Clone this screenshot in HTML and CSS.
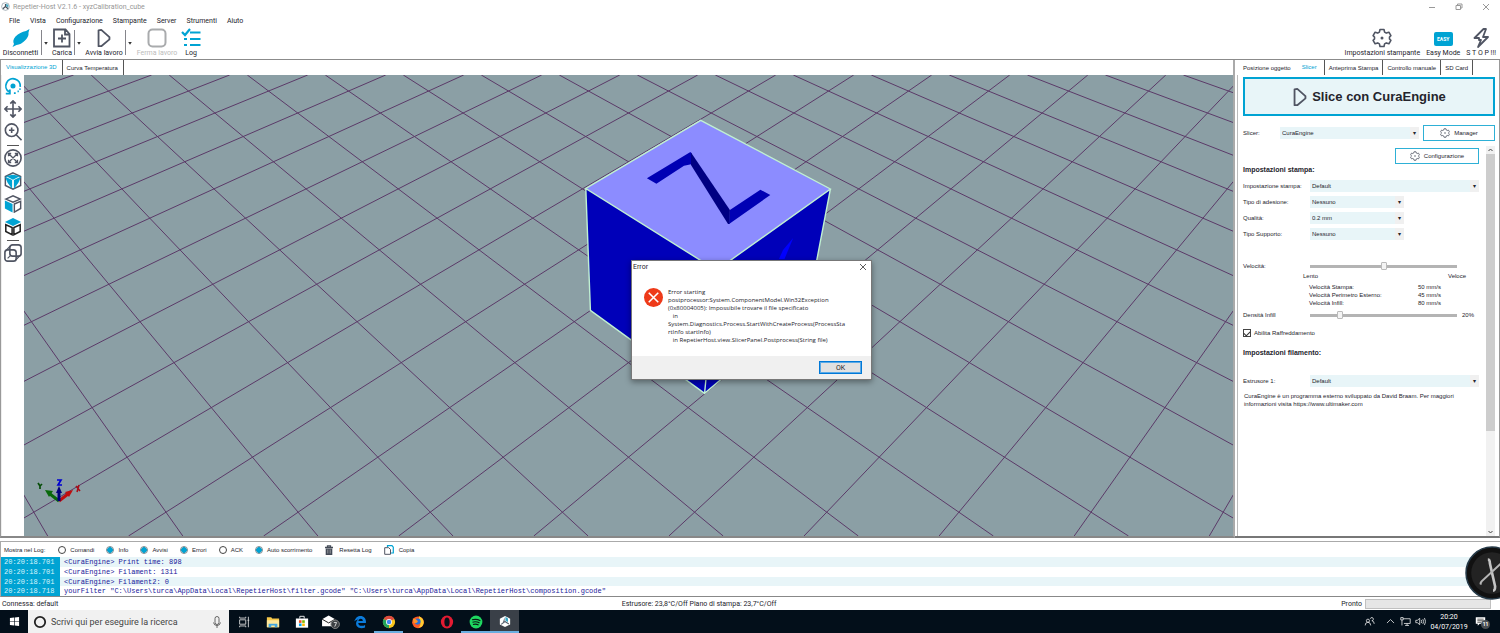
FILE: index.html
```html
<!DOCTYPE html>
<html lang="it">
<head>
<meta charset="utf-8">
<title>Repetier-Host V2.1.6 - xyzCalibration_cube</title>
<link rel="stylesheet" href="styles.css">
</head>
<body>
<svg class="defs" aria-hidden="true">
  <symbol id="gear" viewBox="0 0 20 20"><path d="M8 1.500h4l.6 2.600 1.700 1 2.600-.9 2 3.400-1.400 1.400v2l1.400 1.400-2 3.400-2.600-.9-1.700 1L12 18.500H8l-.6-2.600-1.700-1-2.600.9-2-3.400L2.500 11V9L1.100 7.600l2-3.400 2.600.9 1.700-1z" fill="none" stroke="#505563" stroke-width="1.600" stroke-linejoin="round"/><circle cx="10" cy="10" r="1.500" fill="#505563"/></symbol>
  <symbol id="play" viewBox="0 0 16 22"><path d="M2 2.500v17.500h3L14 12.500v-2.500L5 2z" fill="none" stroke="#505563" stroke-width="2" stroke-linejoin="round"/></symbol>
  <symbol id="host" viewBox="0 0 14 14"><path d="M7 .5l6 3.200v6.800l-6 3-6-3V3.700z" fill="#fff"/><path d="M7 7L2.500 10.300M7 7l4.500 3" fill="none" stroke="#56616e" stroke-width="1.300"/><path d="M6.500 2v5l-2 1.500z" fill="#56616e"/><path d="M7.500 1.500l3 2v4l-3-1.500z" fill="#39a9c7"/></symbol>
</svg>

<header class="titlebar">
  <svg class="title-icon" viewBox="0 0 14 14"><circle cx="7" cy="7" r="6" fill="#fff" stroke="#7c8b96"/><path d="M7 3v4l-4 3.500M7 7l4 3.500" fill="none" stroke="#46505c" stroke-width="1.800"/><path d="M8 2.500l3.500 2v4L8 6.500z" fill="#47aac5"/></svg>
  <span class="title">Repetier-Host V2.1.6 - xyzCalibration_cube</span>
  <div class="window-buttons">
    <button aria-label="Riduci"><svg viewBox="0 0 8 8"><path d="M1 4.500h6"/></svg></button>
    <button aria-label="Ripristina"><svg viewBox="0 0 8 8"><path d="M1 2.500h4.500v4H1zM2.500 2.500v-1.500H7v4H5.500"/></svg></button>
    <button aria-label="Chiudi"><svg viewBox="0 0 8 8"><path d="M1 1l6 6M7 1L1 7"/></svg></button>
  </div>
</header>

<nav class="menubar">
  <button>File</button><button>Vista</button><button>Configurazione</button><button>Stampante</button><button>Server</button><button>Strumenti</button><button>Aiuto</button>
</nav>

<div class="toolbar">
  <button class="tool tool-first"><svg viewBox="0 0 20 20"><path d="M1.500 19l1.500-3Q1 12.500 4.500 8.500 9 4 15 3l3.500-2-1 3.500q.5 4-3.500 8T5.500 17z" fill="#00a3d3"/></svg>Disconnetti</button>
  <i class="sep"></i><i class="caret"></i>
  <button class="tool tool-load"><svg viewBox="0 0 20 20"><path d="M3 1.500h10.500l4 4.500v12.500H2V1.500zM13 1.500v5h4.500M10 6.500v8M6 10.500h8" fill="none" stroke="#505563" stroke-width="1.800"/></svg>Carica</button>
  <i class="sep"></i><i class="caret"></i>
  <button class="tool tool-run"><svg viewBox="0 0 16 22"><use href="#play"/></svg>Avvia lavoro</button>
  <i class="sep"></i><i class="caret"></i>
  <button class="tool tool-stop" disabled><svg viewBox="0 0 20 20"><rect x="1.500" y="1.500" width="17" height="17" rx="4" fill="none" stroke="#a9abad" stroke-width="2"/></svg>Ferma lavoro</button>
  <button class="tool tool-log"><svg viewBox="0 0 20 20"><path d="M1 4l3 3 5-6M9 4.500h10.500M9 11h10.500M9 17h10.500M3 11h3M3 17h3" fill="none" stroke="#00a3d3" stroke-width="2.200"/></svg>Log</button>
  <div class="toolbar-right">
    <button class="tool"><svg viewBox="0 0 20 20"><use href="#gear"/></svg>Impostazioni stampante</button>
    <button class="tool"><span class="easy">EASY</span>Easy Mode</button>
    <button class="tool"><svg viewBox="0 0 20 20"><path d="M12.500 1L3.500 10h4.500v2h2L7 19l10-10h-5l3-8z" fill="none" stroke="#505563" stroke-width="1.800" stroke-linejoin="round"/></svg>S T O P !!!</button>
  </div>
</div>

<main class="workspace">
  <section class="stage">
    <div class="tabs">
      <button class="tab active">Visualizzazione 3D</button><button class="tab">Curva Temperatura</button>
    </div>
    <div class="stage-body">
      <div class="view-tools">
        <button aria-label="Ruota"><svg viewBox="0 0 20 20"><path d="M5.500 16.500A8 8 0 1 1 18 11M2 18.500h4.500V14" fill="none" stroke="#00a3d3" stroke-width="2"/><circle cx="10" cy="10" r="2.800" fill="#00a3d3" stroke="none"/><path d="M11 18h2M15 16h1.500M17 13.500h1.500" stroke="#00a3d3" stroke-width="2"/></svg></button>
        <button aria-label="Sposta"><svg viewBox="0 0 20 20"><path d="M10 1v18M1 10h18M7 4l3-3 3 3M7 16l3 3 3-3M4 7l-3 3 3 3M16 7l3 3-3 3"/></svg></button>
        <button aria-label="Zoom"><svg viewBox="0 0 20 20"><circle cx="8.500" cy="8" r="7"/><path d="M13.500 13l6 6M8.500 5v6M5.500 8h6"/></svg></button>
        <i></i>
        <button aria-label="Adatta"><svg viewBox="0 0 20 20"><circle cx="10" cy="10" r="9"/><path d="M5 5l10 10M15 5L5 15M5 8V5h3M12 5h3v3M5 12v3h3M12 15h3v-3" stroke-width="1.400"/></svg></button>
        <button aria-label="Isometrica"><svg viewBox="0 0 20 20"><path d="M10 1l8.500 4v10L10 19l-8.500-4V5z" stroke-width="1.600"/><path d="M1 5l8 4v10L4 12z M19 5l-8 4v10l5-7z M2 4.500L10 3l8 1.500L10 8.500z" fill="#00a3d3" stroke="none"/></svg></button>
        <button aria-label="Fronte"><svg viewBox="0 0 20 20"><path d="M2 4.500L10 1l8 3.500-8 3.500zM11.500 10l7-3v8l-7 4z" stroke-width="1.600"/><path d="M1 6l8.500 4v9.500L1 15z" fill="#00a3d3" stroke="none"/></svg></button>
        <button aria-label="Alto"><svg viewBox="0 0 20 20"><path d="M2 7.500l7 3v8l-7-3.500zM18 7.500l-7 3v8l7-3.500z" stroke="#222" stroke-width="1.700"/><path d="M10 0l9 4.500-9 4.500-9-4.500z" fill="#00a3d3" stroke="none"/></svg></button>
        <i></i>
        <button aria-label="Prospettiva"><svg viewBox="0 0 20 20"><rect x="6.500" y="1" width="12.500" height="12.500" rx="3"/><rect x="1" y="6.500" width="12.500" height="12.500" rx="3"/><path d="M2 7.500l5-5.500M13 18l5-5.500M4 16l4-4" stroke-width="1.300"/></svg></button>
      </div>
      <svg class="scene" viewBox="0 0 1209 461" preserveAspectRatio="xMidYMid slice" role="img" aria-label="Cubo sul piano di stampa">
        <rect width="1209" height="461" fill="#8b9fa5"/>
        <g fill="none" stroke="#5b3a68" stroke-width="1">
          <path id="grid-lines" d="M-244.800 0L23.700 461M-166.800 0L158.800 461M-88.800 0L293.900 461M-10.800 0L429 461M67.200 0L564.100 461M145.200 0L699.200 461M223.300 0L834.300 461M301.300 0L969.400 461M379.300 0L1104.500 461M457.300 0L1239.600 461M535.300 0L1374.700 461M613.300 0L1509.800 461M691.300 0L1644.900 461M769.300 0L1780 461M847.300 0L1915.100 461M925.300 0L2050.200 461M1003.400 0L2185.300 461M1081.400 0L2320.400 461M1159.400 0L2455.500 461"/>
          <use href="#grid-lines" transform="translate(1209 0) scale(-1 1)"/>
        </g>
        <path d="M561.800 113.500L692.400 195.300 806.400 114 784 231 680.600 318.300 566.400 235.300z" fill="#0000b9"/>
        <path d="M676.700 45.300L806.400 114 692.400 195.300 561.800 113.500z" fill="#8c8cff"/>
        <path d="M755 184l4-9 10.200-12-8.700 21z" fill="#0000ff"/>
        <path d="M622.900 103.300L666.400 77l1.600 2-.8 10.300-7.200 1.400-27.600 18zM736.400 114.700l9.900 5.300-41.200 29 .8-14z" fill="#0000b4"/>
        <path d="M667 77.500l38.900 57.500-.4 14h-1.500L667 90z" fill="#000082"/>
        <path d="M676.700 45.300L806.400 114 692.400 195.300 561.800 113.500zM561.800 113.500l4.600 121.800 114.200 83L784 231l22.400-117M692.400 195.300L680.600 318.300" fill="none" stroke="#c0f0d2" stroke-width="1.400"/>
        <g stroke-width="3"><path d="M35 426L26 419" stroke="#08690b"/><path d="M35 426l9-7" stroke="#c00d0d"/><path d="M35 426v-10" stroke="#00007c"/></g>
        <path d="M21 415l8 1-4 6z" fill="#08690b"/><path d="M49 415l-8 2 4 5z" fill="#c00d0d"/><path d="M35 411l-3 7h6z" fill="#00007c"/>
        <path d="M14 408l2 3 2-2M16 411v3" fill="none" stroke="#064d08" stroke-width="1.700"/><path d="M33 405h4l-3 5h4" fill="none" stroke="#0000d2" stroke-width="1.700"/><path d="M55 410l-2 7M52 411l4 5" fill="none" stroke="#a90d18" stroke-width="1.500"/>
      </svg>
    </div>
  </section>

  <aside class="side">
    <div class="tabs side-tabs">
      <button class="tab">Posizione oggetto</button><button class="tab active">Slicer</button><button class="tab">Anteprima Stampa</button><button class="tab">Controllo manuale</button><button class="tab">SD Card</button>
    </div>
    <div class="panel">
      <button class="slice"><svg viewBox="0 0 16 22"><use href="#play"/></svg>Slice con CuraEngine</button>
      <div class="slicer-row">
        <label for="slicer">Slicer:</label>
        <span class="pick"><select id="slicer"><option>CuraEngine</option></select></span>
        <button class="boxed"><svg viewBox="0 0 20 20"><use href="#gear"/></svg>Manager</button>
      </div>
      <div class="settings">
        <form class="form">
          <button type="button" class="boxed config"><svg viewBox="0 0 20 20"><use href="#gear"/></svg>Configurazione</button>
          <h2>Impostazioni stampa:</h2>
          <div class="row"><label for="preset">Impostazione stampa:</label><span class="pick"><select id="preset"><option>Default</option></select></span></div>
          <div class="row short"><label for="adesione">Tipo di adesione:</label><span class="pick"><select id="adesione"><option>Nessuno</option></select></span></div>
          <div class="row short"><label for="qualita">Qualità:</label><span class="pick"><select id="qualita"><option>0.2 mm</option></select></span></div>
          <div class="row short"><label for="supporto">Tipo Supporto:</label><span class="pick"><select id="supporto"><option>Nessuno</option></select></span></div>
          <div class="row speed"><label for="velocita">Velocità:</label><input id="velocita" type="range" min="0" max="100" value="50"></div>
          <div class="ends"><span>Lento</span><span>Veloce</span></div>
          <dl class="speeds"><dt>Velocità Stampa:</dt><dd>50 mm/s</dd><dt>Velocità Perimetro Esterno:</dt><dd>45 mm/s</dd><dt>Velocità Infill:</dt><dd>80 mm/s</dd></dl>
          <div class="row"><label for="densita">Densità Infill</label><span class="density"><input id="densita" type="range" min="0" max="100" value="19"><output for="densita">20%</output></span></div>
          <label class="cooling"><input type="checkbox" checked>Abilita Raffreddamento</label>
          <h2>Impostazioni filamento:</h2>
          <div class="row extruder"><label for="estrusore">Estrusore 1:</label><span class="pick"><select id="estrusore"><option>Default</option></select></span></div>
          <p>CuraEngine è un programma esterno sviluppato da David Braam. Per maggiori informazioni visita https://www.ultimaker.com</p>
        </form>
        <div class="scrollbar"><svg viewBox="0 0 8 8"><path d="M2 5l2-2 2 2"/></svg><span></span><svg viewBox="0 0 8 8"><path d="M2 3l2 2 2-2"/></svg></div>
      </div>
    </div>
  </aside>
</main>

<section class="log">
  <div class="log-controls">
    <span>Mostra nel Log:</span>
    <label><input type="checkbox">Comandi</label>
    <label><input type="checkbox" checked>Info</label>
    <label><input type="checkbox" checked>Avvisi</label>
    <label><input type="checkbox" checked>Errori</label>
    <label><input type="checkbox">ACK</label>
    <label><input type="checkbox" checked>Auto scorrimento</label>
    <button><svg viewBox="0 0 10 10"><path d="M1 2.500h8M3.500 2V.8h3V2" fill="none" stroke="#444b57" stroke-width="1.300"/><path d="M1.700 3.500h6.600V10H1.700z" fill="#444b57"/><path d="M3.800 4.500v4M6.200 4.500v4" stroke="#ccc" stroke-width=".6"/></svg>Resetta Log</button>
    <button><svg viewBox="0 0 10 10"><path d="M3.500 2V.7H8l1.300 1.500V8H7" fill="none" stroke="#00a3d3" stroke-width="1.200"/><path d="M.7 2.700h4L6.500 4.500v4.800H.7z" fill="#fff" stroke="#505563" stroke-width="1"/></svg>Copia</button>
  </div>
  <div class="log-lines">
    <div><time>20:20:18.701</time><span>&lt;CuraEngine&gt; Print time: 898</span></div>
    <div><time>20:20:18.701</time><span>&lt;CuraEngine&gt; Filament: 1311</span></div>
    <div><time>20:20:18.701</time><span>&lt;CuraEngine&gt; Filament2: 0</span></div>
    <div><time>20:20:18.718</time><span>yourFilter "C:\Users\turca\AppData\Local\RepetierHost\filter.gcode" "C:\Users\turca\AppData\Local\RepetierHost\composition.gcode"</span></div>
  </div>
</section>

<footer class="status">
  <span>Connessa: default</span>
  <span class="temps">Estrusore: 23,8°C/Off Piano di stampa: 23,7°C/Off</span>
  <span class="ready">Pronto <i></i></span>
</footer>

<div class="taskbar">
  <button class="start" aria-label="Start"><svg viewBox="0 0 12 12"><path d="M1 2.300l4.500-.6v4H1zM6.200 1.600L11 1v4.700H6.200zM1 6.400h4.500v4L1 9.800zM6.200 6.400H11V11l-4.800-.6z" fill="#fff"/></svg></button>
  <label class="search"><svg viewBox="0 0 14 14"><circle cx="7" cy="7" r="5.200" fill="none" stroke="#222" stroke-width="1.800"/></svg><input type="text" placeholder="Scrivi qui per eseguire la ricerca" aria-label="Cerca"><svg class="mic" viewBox="0 0 14 14"><path d="M5 3.500a2 2 0 0 1 4 0v4a2 2 0 0 1-4 0zM3.500 7.500q.5 3 3.500 3t3.500-3M7 10.500V13" fill="none" stroke="#444" stroke-width=".8"/></svg></label>
  <div class="apps">
    <button aria-label="Visualizzazione attività"><svg viewBox="0 0 16 16"><path d="M3 5.500h7v5H3zM3 2v1.500h7V2M3 14v-1.500h7V14M13 2v12M12 6h2" fill="none" stroke="#ddd" stroke-width="1"/></svg></button>
    <button aria-label="Esplora file"><svg viewBox="0 0 16 16"><path d="M1 2.500h5l1 1.500h8v10H1z" fill="#f7c94b"/><path d="M1 6h14v8H1z" fill="#ffe89b"/><path d="M3 14v-4h10v4h-3v-2H6v2z" fill="#43a6df"/></svg></button>
    <button aria-label="Store"><svg viewBox="0 0 16 16"><path d="M5.500 4V1.500h5V4" fill="none" stroke="#fff"/><path d="M1 4h14v10.500H1z" fill="#fff"/><path d="M4.500 6H7.500v3H4.500z" fill="#ef5021"/><path d="M8.200 6h3v3h-3z" fill="#7eb900"/><path d="M4.500 9.700h3v3h-3z" fill="#02a3ee"/><path d="M8.200 9.700h3v3h-3z" fill="#ffb900"/></svg></button>
    <button aria-label="Posta"><svg class="mail" viewBox="0 0 20 16"><path d="M1 5.500l7-4 7 4V13H1z" fill="#fff"/><path d="M1 5.500L8 9.500l7-4" fill="none" stroke="#111"/><circle cx="15" cy="11" r="4.500" fill="#3d4145" stroke="#888"/><path d="M13.500 9h3l-2 4.500" fill="none" stroke="#ddd"/></svg></button>
    <button aria-label="Edge"><svg viewBox="0 0 16 16"><path d="M1.500 7.500C2.500 3 5.500 1 8.500 1c4 0 6.300 3 6.300 6.500V9H6c0 2.200 1.800 3.300 4 3.300 1.500 0 2.700-.4 3.800-1v2.900c-1.200.6-2.600.9-4.300.9C6 15.100 3.500 13 3.500 9.800c0-2 .9-3.700 2.600-4.800C4.200 5.200 2.500 6 1.500 7.500zM6.200 6.800h5C11.200 5.200 10.300 4.300 8.800 4.300S6.400 5.400 6.200 6.800z" fill="#0b7bdb"/></svg></button>
    <button class="open" aria-label="Chrome"><svg viewBox="0 0 16 16"><circle cx="8" cy="8" r="7" fill="#f8c51c"/><path d="M8 8L1.900 4.500A7 7 0 0 1 14.100 4.500z" fill="#dd4b3e"/><path d="M8 8L1.900 4.500A7 7 0 0 0 8 15z" fill="#23a45a"/><circle cx="8" cy="8" r="3.400" fill="#fff"/><circle cx="8" cy="8" r="2.600" fill="#4285f4"/></svg></button>
    <button aria-label="Firefox"><svg viewBox="0 0 16 16"><circle cx="8" cy="8.300" r="6.700" fill="#ff5a24"/><path d="M9 1q6 3 5.500 8-1 5-6 5.500 4-4 1-8z" fill="#ffcd31"/><circle cx="7.500" cy="7.500" r="3.500" fill="#2971d7"/><path d="M2 4q4 0 6 3.500-2 3-5 1.500z" fill="#ff9428"/></svg></button>
    <button aria-label="Opera"><svg viewBox="0 0 16 16"><ellipse cx="8" cy="8" rx="7" ry="7.300" fill="#e31b32"/><ellipse cx="8" cy="8" rx="3" ry="5.200" fill="#08101a"/></svg></button>
    <button class="open" aria-label="Spotify"><svg viewBox="0 0 16 16"><circle cx="8" cy="8" r="7.300" fill="#1ed760"/><path d="M3.500 5.500q5-1.500 9.500 1M4 8.200q4-1.200 8 .8M4.500 10.800q3.500-1 6.500.6" fill="none" stroke="#0a1914" stroke-width="1.300"/></svg></button>
    <button class="open current" aria-label="Repetier-Host"><svg class="host" viewBox="0 0 14 14"><use href="#host"/></svg></button>
  </div>
  <div class="tray">
    <svg viewBox="0 0 14 14"><circle cx="5" cy="6" r="2"/><path d="M1.500 12q0-4 3.500-4t3.500 4M8 3.500a2 2 0 1 1 2 2.500q3 .5 3 4"/></svg>
    <svg class="up" viewBox="0 0 14 14"><path d="M2.500 9L7 4.500 11.500 9"/></svg>
    <svg viewBox="0 0 14 14"><path d="M4 3.500h9v6H5M9 9.500V12M6.500 12h5M1 2h3v3H1zM2.500 5v7"/></svg>
    <svg viewBox="0 0 14 14"><path d="M1 5.500h2L6 3v8L3 8.500H1zM8 5q1 2 0 4M10 4q2 3 0 6M12 2.500q3 4.500 0 9"/></svg>
    <div class="clock"><span>20:20</span><span>04/07/2019</span></div>
    <div class="notice"><svg viewBox="0 0 14 14"><path d="M1 1.500h12v8.500H6L3.500 12.500V10H1z" fill="#fff" stroke="none"/><path d="M3 4h8M3 6h8M3 8h5" stroke="#222" stroke-width=".9"/></svg><b>11</b></div>
  </div>
</div>

<div class="dialog" role="alertdialog" aria-labelledby="dialog-title">
  <div class="dialog-head"><span id="dialog-title">Error</span><button aria-label="Chiudi"><svg viewBox="0 0 8 8"><path d="M1 1l6 6M7 1L1 7" stroke="#333" stroke-width=".8"/></svg></button></div>
  <div class="dialog-body">
    <svg viewBox="0 0 18 18"><circle cx="9" cy="9" r="9" fill="#ee3a19"/><path d="M4.500 4.500l9 9M13.500 4.500l-9 9" stroke="#fff" stroke-width="1.500"/></svg>
    <p>Error starting
postprocessor:System.ComponentModel.Win32Exception
(0x80004005): Impossibile trovare il file specificato
   in
System.Diagnostics.Process.StartWithCreateProcess(ProcessSta
rtInfo startInfo)
   in RepetierHost.view.SlicerPanel.Postprocess(String file)</p>
  </div>
  <div class="dialog-foot"><button>OK</button></div>
</div>

<button class="launcher" aria-label="X"><svg viewBox="0 0 52 52"><circle cx="26" cy="26" r="25" fill="#111" stroke="#263a48" stroke-width="1.500"/><circle cx="26" cy="26" r="20" fill="#232323"/><path d="M22 13q2 0 2 4l5 22q0 4-2 4" fill="none" stroke="#c4c4c4" stroke-width="2.500"/><path d="M40 12L16 34q-2 3 0 2" fill="none" stroke="#b5b5b5" stroke-width="2"/></svg></button>
</body>
</html>
```
FILE: styles.css
```css
* { box-sizing: border-box; }
html, body { height: 100%; }
body {
  margin: 0;
  display: flex;
  flex-direction: column;
  position: relative;
  overflow: hidden;
  background: #fff;
  color: #24242c;
  font: 7px/8px Roboto, "Noto Sans", sans-serif;
  white-space: nowrap;
}
button, input, select { font: inherit; color: inherit; }
button { margin: 0; padding: 0; border: 0; background: none; }
svg { display: block; flex: none; }
.defs { position: absolute; width: 0; height: 0; }

.titlebar { display: flex; align-items: center; gap: 3px; height: 13px; padding-left: 1px; flex: none; color: #969696; }
.title-icon { width: 9px; height: 9px; }
.window-buttons { display: flex; gap: 19px; margin-left: auto; padding-right: 10px; }
.window-buttons svg { width: 8px; height: 8px; fill: none; stroke: #999; }

.menubar { display: flex; gap: 10px; height: 15px; padding-left: 9px; align-items: center; flex: none; }

.toolbar { display: flex; height: 32px; flex: none; border-bottom: 1px solid #8b8b8b; }
.tool { display: flex; flex-direction: column; align-items: center; height: 29px; justify-content: space-between; }
.tool svg { width: 20px; height: 20px; }
.tool-first { width: 41px; }
.tool-load { width: 24px; }
.tool-run { width: 42px; }
.tool-stop { width: 46px; color: #bbb; }
.tool-log { width: 22px; }
.sep { width: 1px; height: 25px; margin-top: 2px; background: #85858b; }
.caret { width: 6px; height: 3px; margin: 14px 1px 0; background: #333; clip-path: polygon(20% 0, 80% 0, 50% 90%); }
.toolbar-right { display: flex; gap: 6px; margin-left: auto; padding-right: 4px; }
.easy { width: 19px; height: 14px; margin-top: 4px; border-radius: 2px; background: #00a3d3; color: #fff; font-size: 5px; font-weight: 700; line-height: 14px; text-align: center; }

.workspace { display: flex; flex: 1; min-height: 0; }
.stage { display: flex; flex-direction: column; flex: 1; min-width: 0; border-left: 1px solid #999; border-right: 2px solid #aaa; border-bottom: 2px solid #888; }
.tabs { display: flex; height: 15px; flex: none; font: 6px/8px "Liberation Sans", sans-serif; }
.tab { padding: 1px 5px 0 4px; border-right: 1px solid #555; }
.tab.active { padding: 0 5px 2px; color: #00a3d3; }
.stage-body { display: flex; flex: 1; min-height: 0; }
.view-tools { display: flex; flex-direction: column; align-items: center; gap: 5px; width: 23px; padding: 2px 1px 0 0; border-left: 1px solid #eee; flex: none; }
.view-tools svg { width: 18px; height: 18px; fill: none; stroke: #505563; stroke-width: 1.8; }
.view-tools i { width: 12px; height: 1px; margin: -1px 0 -2px; background: #555; }
.scene { width: 100%; height: 100%; flex: 1; min-width: 0; }

.side { display: flex; flex-direction: column; width: 265px; padding: 0 4px 0 2px; border-right: 1px solid #999; border-bottom: 2px solid #777; font: 6px/8px "Liberation Sans", sans-serif; flex: none; }
.side-tabs { padding-left: 2px; }
.side-tabs .tab { padding: 1px 4px; }
.side-tabs .tab:first-child { border-right: 0; }
.side-tabs .tab.active { padding: 0 7px 2px; }
.panel { display: flex; flex-direction: column; flex: 1; min-height: 0; padding: 2px 0 0 5px; border-left: 1px solid #bbb; }
.slice { display: flex; align-items: center; justify-content: center; gap: 4px; height: 39px; flex: none; background: #e8f5f8; border: 2px solid #00a3d3; font-size: 13px; font-weight: 700; line-height: 16px; }
.slice svg { width: 16px; height: 20px; }
.slicer-row { display: grid; grid-template-columns: 37px 1fr 72px; align-items: center; margin-top: 9px; }
.slicer-row .pick { margin-right: 4px; }
.boxed { display: flex; align-items: center; justify-content: center; gap: 4px; height: 16px; border: 1px solid #2eb0d6; background: #fff; }
.boxed svg { width: 10px; height: 10px; }
.pick { display: block; position: relative; height: 12px; }
.pick select { display: block; width: 100%; height: 12px; padding: 0 2px; border: 0; border-radius: 0; background: #e8f5f8; appearance: none; }
.pick::after { content: "▾"; position: absolute; top: 0; right: 0; width: 9px; height: 12px; background: #f0f0f0; line-height: 12px; text-align: center; pointer-events: none; }
.settings { display: flex; flex: 1; min-height: 0; margin-top: 5px; }
.form { flex: 1; min-width: 0; padding: 2px 7px 0 0; }
.config { width: 84px; margin-left: auto; }
h2 { margin: 2px 0 6px; font-size: 7px; line-height: 8px; }
.row { display: grid; grid-template-columns: 67px 1fr; align-items: center; height: 12px; margin-bottom: 4px; }
.short .pick { width: 94px; }
.speed { margin-top: 20px; margin-bottom: 0; }
input[type="range"] { width: 147px; height: 8px; margin: 0; appearance: none; background: linear-gradient(#b4b4b4, #b4b4b4) center / 100% 3px no-repeat; }
input[type="range"]::-webkit-slider-thumb { appearance: none; width: 6px; height: 8px; border: 1px solid #bbb; border-radius: 1px; background: #f4f4f4; }
.ends { display: flex; justify-content: space-between; padding: 0 13px 0 60px; }
.speeds { display: grid; grid-template-columns: 109px 1fr; margin: 3px 0 2px 66px; }
.speeds dd { margin: 0; }
.density { display: flex; align-items: center; gap: 5px; }
.cooling { display: flex; align-items: center; gap: 3px; margin: 8px 0 12px; }
.cooling input { display: grid; place-items: center; width: 8px; height: 8px; margin: 0; appearance: none; border: 1px solid #444; background: #fff; }
.cooling input:checked::before { content: ""; width: 5px; height: 3px; border-left: 1px solid #333; border-bottom: 1px solid #333; transform: rotate(-45deg); }
.extruder { margin-top: 18px; margin-bottom: 5px; }
.form p { margin: 0 0 0 1px; white-space: normal; }
.scrollbar { display: flex; flex-direction: column; width: 9px; background: #f1f1f1; }
.scrollbar svg { width: 9px; height: 8px; fill: none; stroke: #444; }
.scrollbar span { flex: none; height: 71%; background: #cdcdcd; }
.scrollbar svg:last-child { margin-top: auto; }

.log { flex: none; margin-top: 3px; border-top: 1px solid #aaa; border-bottom: 1px solid #888; border-left: 1px solid #aaa; }
.log-controls { display: flex; align-items: center; gap: 12px; height: 15px; padding-left: 3px; font: 6px/8px "Liberation Sans", sans-serif; }
.log-controls > span { margin-right: 1px; }
.log-controls label, .log-controls button { display: flex; align-items: center; gap: 4px; }
.log-controls button { gap: 5px; }
.log-controls input { width: 8px; height: 8px; margin: 0; appearance: none; border: 1px solid #444; border-radius: 50%; background: #fff; }
.log-controls input:checked { border-color: #7c8b92; background: radial-gradient(#00a3d3 60%, #fff 75%); }
.log-controls svg { width: 10px; height: 10px; }
.log-lines { display: grid; grid-template-rows: repeat(4, 1fr); height: 39px; color: #19199a; font: 7px/10px "Liberation Mono", monospace; }
.log-lines div { display: flex; min-height: 0; }
.log-lines div:nth-child(odd) { background: #e8f5f8; }
.log-lines time { width: 59px; padding-left: 3px; margin-right: 4px; background: #00a3d3; color: #d8f4fb; }

.status { display: grid; grid-template-columns: 1fr auto 1fr; align-items: center; height: 13px; padding: 0 9px 0 2px; flex: none; }
.temps { margin-right: 95px; }
.ready { display: flex; align-items: center; justify-content: flex-end; gap: 3px; }
.ready i { width: 126px; height: 10px; border: 1px solid #c0c0c0; background: #e6e6e6; }

.taskbar { display: flex; height: 23px; flex: none; background: #030f1a; color: #fff; }
.start { width: 28px; display: grid; place-items: center; }
.start svg { width: 11px; height: 11px; }
.search { display: flex; align-items: center; gap: 4px; width: 201px; padding: 0 5px; background: #f1f1f1; color: #333; }
.search svg { width: 14px; height: 14px; }
.search input { flex: 1; min-width: 0; padding: 0; border: 0; background: none; font-size: 9px; line-height: 12px; }
.search input::placeholder { color: #444; }
.apps { display: flex; }
.apps button { width: 29px; display: grid; place-items: center; padding-top: 2px; border-bottom: 2px solid transparent; }
.apps svg { width: 14px; height: 14px; }
.apps .mail { width: 19px; height: 15px; }
.apps .host { width: 12px; height: 13px; }
.apps .open { border-bottom-color: #6aaee0; }
.apps .current { background: #3a4048; }
.tray { display: flex; align-items: center; gap: 4px; margin-left: auto; padding-right: 7px; }
.tray svg { width: 11px; height: 11px; fill: none; stroke: #eee; }
.tray .up { margin-left: 6px; }
.clock { display: flex; flex-direction: column; gap: 2px; width: 38px; text-align: center; }
.notice { position: relative; width: 18px; margin-left: 3px; }
.notice b { position: absolute; left: 6px; top: 4px; width: 9px; height: 9px; border-radius: 50%; background: #4b4f54; font-size: 5px; line-height: 9px; text-align: center; }

.dialog { position: absolute; left: 631px; top: 260px; width: 241px; background: #fff; border: 1px solid #777; box-shadow: 0 2px 6px rgba(0, 0, 0, .4); }
.dialog-head { display: flex; justify-content: space-between; padding: 2px 4px 0 1px; }
.dialog-head svg { width: 8px; height: 8px; }
.dialog-body { display: flex; gap: 5px; padding: 17px 12px 12px; }
.dialog-body svg { width: 19px; height: 19px; }
.dialog-body p { margin: 0; font: 6px/8px "Open Sans", sans-serif; white-space: pre; }
.dialog-foot { display: flex; justify-content: flex-end; padding: 5px 9px; background: #f0f0f0; }
.dialog-foot button { width: 43px; height: 13px; border: 1px solid #0078d7; outline: 1px solid #5aa9e6; outline-offset: -2px; background: #e1e1e1; }

.launcher { position: absolute; right: -19px; bottom: 33px; }
.launcher svg { width: 54px; height: 54px; }
```
